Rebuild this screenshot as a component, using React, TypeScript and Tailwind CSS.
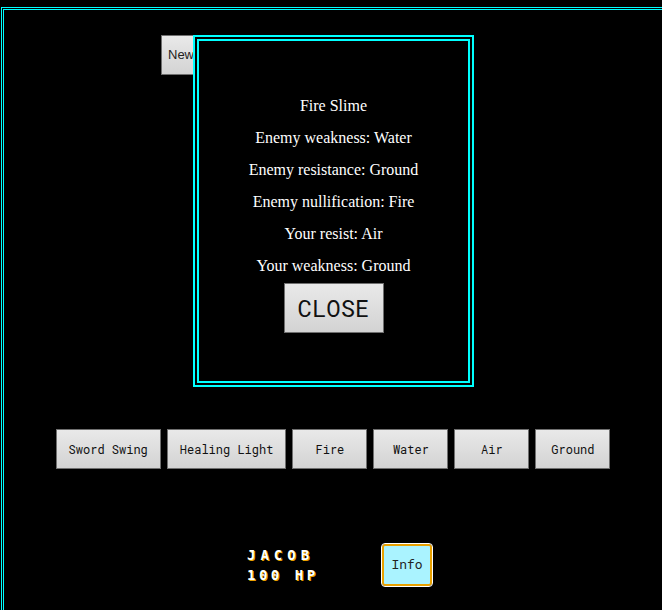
import React from 'react';

const mono = "font-['Roboto_Mono','DejaVu_Sans_Mono',monospace]";
const btn =
  'bg-gradient-to-b from-[#e9e9e9] to-[#d3d3d3] border border-[#6f6f6f] text-[#111] ' + mono;

const moves = ['Sword Swing', 'Healing Light', 'Fire', 'Water', 'Air', 'Ground'];

const lines = [
  'Fire Slime',
  'Enemy weakness: Water',
  'Enemy resistance: Ground',
  'Enemy nullification: Fire',
  'Your resist: Air',
  'Your weakness: Ground',
];

export default function App() {
  return (
    <div className="relative w-[662px] h-[610px] overflow-hidden bg-black">
      <div className="ml-[1px] mt-[7px] w-[720px] h-[640px] border-[3px] border-double border-[#00ffff]">
        <div className="w-[658px] flex flex-col">
          {/* top controls (mostly hidden by the dialog) */}
          <div className="pt-[25px] pl-[157px] flex">
            <button className="h-[40px] w-[80px] pl-[6px] text-left whitespace-nowrap text-[13px] text-[#222] bg-gradient-to-b from-[#e9e9e9] to-[#d3d3d3] border border-[#6f6f6f] font-['Liberation_Sans',Arial,sans-serif]">
              New Game
            </button>
          </div>

          {/* moves */}
          <div className="mt-[354px] flex justify-center gap-[6px]">
            {moves.map(m => (
              <button
                key={m}
                className={`${btn} h-[40px] min-w-[75px] px-3 text-[12px] whitespace-pre`}
              >
                {m}
              </button>
            ))}
          </div>

          {/* player */}
          <div className="mt-[75px] pl-[243px] flex items-center">
            <div className="w-[78px] flex flex-col gap-[6px] font-['DejaVu_Sans_Mono',monospace] font-bold text-[14px] leading-[14px] tracking-[5px] text-white [text-shadow:1px_1px_0_#e8a000]">
              <span>JACOB</span>
              <span className="tracking-[3.5px]">100 HP</span>
            </div>
            <button
              className={`ml-[57px] h-[42px] w-[50px] rounded-[3px] border-2 border-[#e8a000] outline outline-1 outline-white bg-[#aaf3ff] text-[13px] text-[#222] ${mono}`}
            >
              Info
            </button>
          </div>
        </div>
      </div>

      {/* enemy info dialog */}
      <div className="absolute left-[193px] top-[35px] w-[281px] h-[352px] bg-black border-[6px] border-double border-[#00ffff]">
        <div className="pt-[56px] flex flex-col items-center text-white text-[16px] leading-[18px] font-['Liberation_Serif','Times_New_Roman',serif]">
          {lines.map((l, i) => (
            <p key={l} className={i === lines.length - 1 ? 'mb-[8px]' : 'mb-[14px]'}>
              {l}
            </p>
          ))}
          <button className={`${btn} h-[50px] w-[100px] text-[24px]`}>CLOSE</button>
        </div>
      </div>
    </div>
  );
}
